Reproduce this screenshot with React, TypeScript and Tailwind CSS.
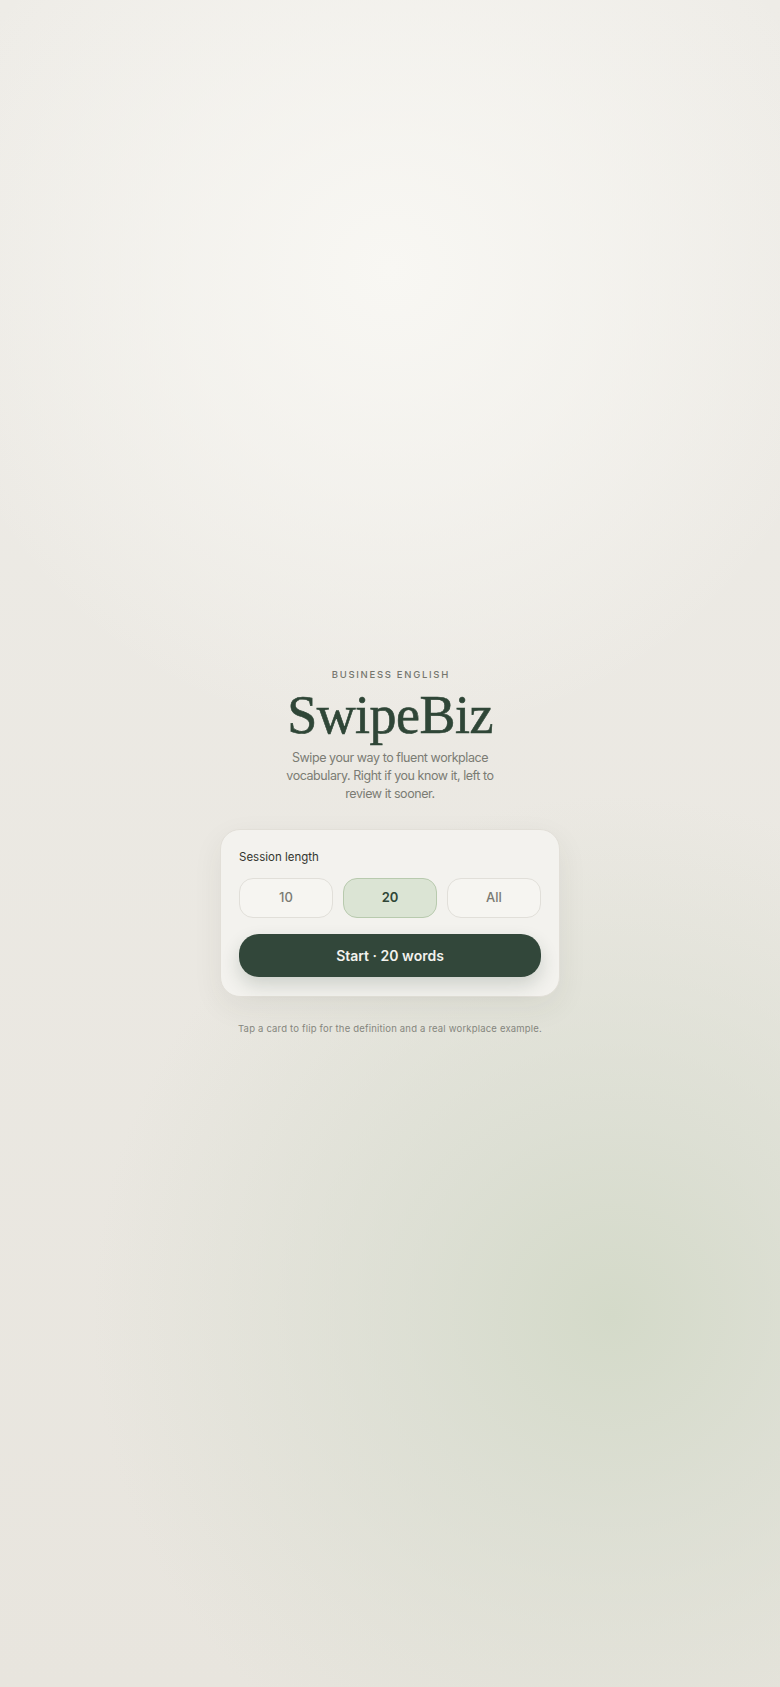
import React, { useState } from "react";

export default function App() {
  const [len, setLen] = useState<string>("20");
  const opts = ["10", "20", "All"];
  const count = len === "All" ? "all" : len;
  return (
    <div className="relative min-h-screen w-full overflow-hidden bg-[#ebe8e2] bg-[image:radial-gradient(circle_at_50%_16%,#f8f7f3_0px,rgba(248,247,243,0.6)_220px,rgba(248,247,243,0)_470px),radial-gradient(circle_at_78.5%_78%,#d4dac9_0px,rgba(214,219,205,0.65)_200px,rgba(214,219,205,0)_520px),linear-gradient(to_bottom,#eeece7,#e8e5de)] font-['Inter','Noto_Sans',sans-serif]">
      <div className="flex min-h-screen flex-col items-center justify-center pt-[16px]">
        <div className="text-[9.5px] leading-[15px] tracking-[0.18em] uppercase text-[#75766e] font-medium pl-[0.18em]">
          Business English
        </div>
        <h1 className="mt-[6px] font-['Liberation_Serif',serif] text-[54px] leading-[54px] tracking-[-0.01em] text-[#2f4637] [-webkit-text-stroke:0.6px_#2f4637]">
          SwipeBiz
        </h1>
        <p className="mt-[7px] w-[214px] text-center text-[12.5px] leading-[18px] tracking-[-0.035em] text-[#7b7c74]">
          Swipe your way to fluent workplace vocabulary. Right if you know it, left to review it sooner.
        </p>
        <div className="mt-[26px] w-[340px] rounded-[20px] border border-[#e2dfd8] bg-[#f3f2ee] px-[18px] pt-[19px] pb-[19px] shadow-[0_10px_30px_rgba(60,60,40,0.07)]">
          <div className="text-[11.5px] leading-[16px] text-[#34362f]">Session length</div>
          <div className="mt-[13px] grid grid-cols-3 gap-[10px]">
            {opts.map((o) => {
              const active = o === len;
              return (
                <button
                  key={o}
                  onClick={() => setLen(o)}
                  className={
                    active
                      ? "h-[40px] rounded-[14px] border border-[#b8caae] bg-[#dbe4d4] text-[13px] font-semibold text-[#2f4637]"
                      : "h-[40px] rounded-[14px] border border-[#e1dfd9] bg-[#f6f5f1] text-[13px] font-medium text-[#7a7a73]"
                  }
                >
                  {o}
                </button>
              );
            })}
          </div>
          <button className="mt-[16px] h-[43px] w-full rounded-[20px] bg-[#32473a] text-[14px] font-semibold text-[#f3f2ed] shadow-[0_8px_18px_rgba(40,60,45,0.18)]">
            Start · {count} words
          </button>
        </div>
        <p className="mt-[24px] text-[9.5px] leading-[15px] tracking-[0.02em] text-[#85867e]">
          Tap a card to flip for the definition and a real workplace example.
        </p>
      </div>
    </div>
  );
}
